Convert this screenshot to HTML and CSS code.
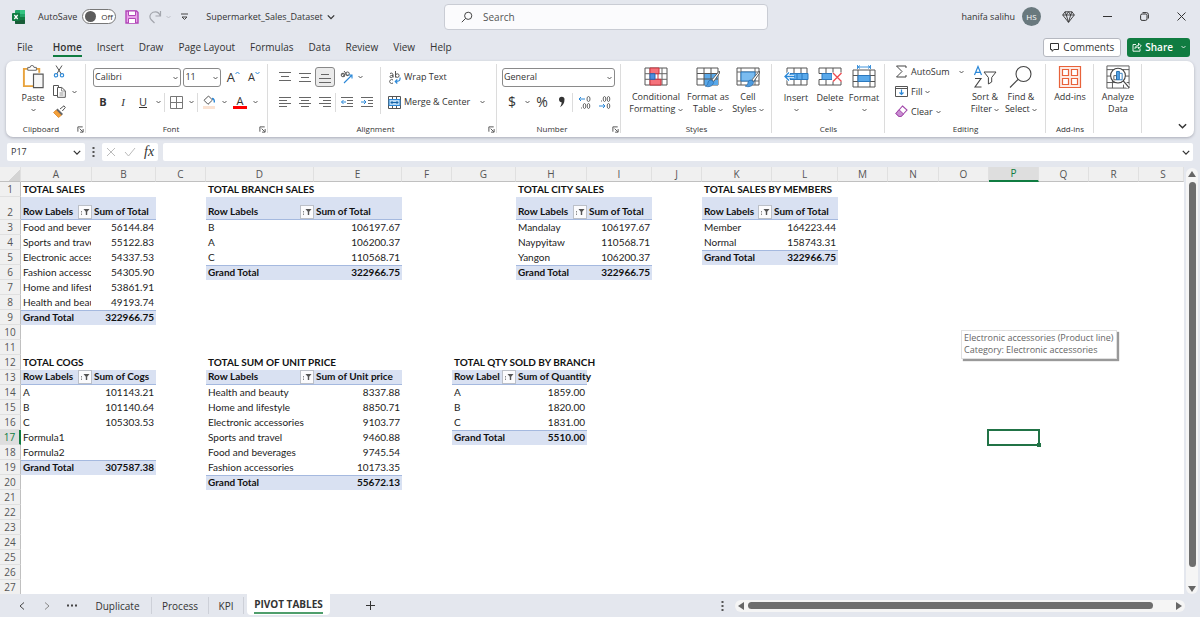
FILE: index.html
```html
<!DOCTYPE html>
<html lang="en">
<head>
  <meta charset="UTF-8">
  <meta name="viewport" content="width=device-width, initial-scale=1.0">
  <title>Supermarket_Sales_Dataset</title>
  <link rel="stylesheet" href="styles.css">
</head>
<body>
  <svg class="defs" aria-hidden="true">
    <symbol id="chev" viewBox="0 0 10 6"><path d="M1 1l4 4 4-4" fill="none" stroke="currentColor" stroke-width="1.6"/></symbol>
    <symbol id="launch" viewBox="0 0 8 8"><path d="M1 6.5V1h5.5M3 3l3.5 3.5M7 3.5V7H3.5" fill="none" stroke="#444" stroke-width="1"/></symbol>
    <symbol id="brush" viewBox="0 0 16 18"><path d="M15.3 1 8 9.8l1.8 1.6L15.6 3z" fill="#fff" stroke="#555" stroke-width=".9"/><path d="M7.6 10.2c-2.600-.6-3.500 1.200-3.800 3.200-.2 1.500-1.300 2.300-2.600 2.600 3 1.500 7.800.6 8.400-3.700z" fill="#4c9be0" stroke="#2b6fae" stroke-width=".8"/></symbol>
    <symbol id="filter" viewBox="0 0 12 12"><path d="M4.500 3h6L8.200 5.800V9H6.800V5.800z" fill="#555"/><path d="M2.500 5v4" stroke="#888" stroke-width="1" stroke-dasharray="1.500 1"/></symbol>
  </svg>

  <header class="titlebar">
    <div class="title-left">
      <svg class="logo" viewBox="0 0 13 14"><rect x="3" width="10" height="14" rx="1" fill="#21a366"/><path d="M8 0h4a1 1 0 0 1 1 1v3H8z" fill="#33c481"/><path d="M3 7h10v6a1 1 0 0 1-1 1H4a1 1 0 0 1-1-1z" fill="#185c37"/><path d="M8 7h5v3H8z" fill="#107c41"/><rect y="3" width="8" height="8" rx="1" fill="#107c41"/><path d="M2.300 5l3.400 4M5.700 5 2.300 9" stroke="#fff" stroke-width="1.200"/></svg>
      <label class="autosave" for="autosave">AutoSave</label>
      <span class="toggle"><input type="checkbox" id="autosave">Off</span>
      <button class="save" aria-label="Save"><svg width="14" height="14" viewBox="0 0 14 14"><path d="M1 1h10.500L13 2.500V13H1z" fill="#e9a3e9" stroke="#b146b8" stroke-width="1.400"/><path d="M3.500 1h7v4.500h-7zM3.500 13V8.500h7V13" fill="#fff" stroke="#b146b8"/></svg></button>
      <button class="redo" aria-label="Redo"><svg width="14" height="14" viewBox="0 0 14 14"><path d="M12.500 1v5H7.500M12.300 5.800C11 2.500 8 1.200 5 2.300 2 3.500 1 7 3 9.500L6.500 13" fill="none" stroke="#a3a6ad" stroke-width="1.200"/></svg><svg class="chev faint"><use href="#chev"/></svg></button>
      <button class="qat" aria-label="Customize Quick Access Toolbar"><svg width="7" height="8" viewBox="0 0 7 8"><path d="M0 1h7M1 4l2.500 2.500L6 4z" fill="none" stroke="#444"/></svg></button>
      <button class="filename">Supermarket_Sales_Dataset <svg width="8" height="6"><use href="#chev"/></svg></button>
    </div>
    <label class="search">
      <svg width="12" height="12" viewBox="0 0 12 12"><circle cx="7.200" cy="4.800" r="3.600" fill="none" stroke="#444"/><path d="M4.600 7.400.8 11.200" stroke="#444"/></svg>
      <input type="text" placeholder="Search" aria-label="Search">
    </label>
    <div class="title-right">
      <span>hanifa salihu</span>
      <span class="avatar">HS</span>
      <button aria-label="Premium"><svg width="13" height="12" viewBox="0 0 13 12"><path d="M3 .8h7L12.300 4 6.500 11.300.7 4zM.7 4h11.600M3 .8 4.300 4l2.200 7.300L8.700 4 10 .8M4.300 4l2.200-3.200L8.700 4" fill="none" stroke="#333" stroke-width=".9"/></svg></button>
      <button aria-label="Minimize"><svg width="9" height="9"><path d="M0 4.500h9" stroke="#333"/></svg></button>
      <button aria-label="Restore"><svg width="9" height="9" viewBox="0 0 9 9"><rect x=".6" y="2" width="6.400" height="6.400" rx="1.500" fill="none" stroke="#333"/><path d="M2.500.6h4A2 2 0 0 1 8.400 2.500v4" fill="none" stroke="#333"/></svg></button>
      <button aria-label="Close"><svg width="9" height="9"><path d="M.5.5l8 8M8.500.5l-8 8" stroke="#333"/></svg></button>
    </div>
  </header>

  <nav class="menubar">
    <a href="#">File</a>
    <a href="#" class="current">Home</a>
    <a href="#">Insert</a>
    <a href="#">Draw</a>
    <a href="#">Page Layout</a>
    <a href="#">Formulas</a>
    <a href="#">Data</a>
    <a href="#">Review</a>
    <a href="#">View</a>
    <a href="#">Help</a>
    <button class="comments"><svg width="9" height="9" viewBox="0 0 9 9"><path d="M.5.500h8v6H4L2 8.300V6.500H.5z" fill="none" stroke="#333"/></svg>Comments</button>
    <button class="share"><svg width="10" height="10" viewBox="0 0 10 10"><path d="M4 2.500H1v6.700h7V6.500M3 6.500c.3-2.300 1.500-3 3.500-3V1.200L9.300 4 6.500 6.600V5C5 5 4 5.300 3 6.500z" fill="none" stroke="#fff" stroke-width=".9"/></svg>Share<svg class="chev"><use href="#chev"/></svg></button>
  </nav>

  <section class="ribbon">
    <div class="group clipboard">
      <div class="body">
        <button class="big paste">
          <svg width="23" height="25" viewBox="0 0 23 25"><path d="M11 22H1.500V4h16v4" fill="none" stroke="#e8a33d" stroke-width="2"/><path d="M5.500 5.500v-3H8a2 2 0 0 1 4 0h2.500v3z" fill="#fff" stroke="#666"/><path d="M11.500 9.500h10v14h-10z" fill="#f7f7f7" stroke="#555" stroke-width="1.200"/></svg>
          <span>Paste</span>
          <svg class="chev"><use href="#chev"/></svg>
        </button>
        <div class="clip-tools">
          <button aria-label="Cut"><svg width="12" height="13" viewBox="0 0 12 13"><path d="M3 .5 8.300 9M9 .5 3.700 9" fill="none" stroke="#555"/><circle cx="3" cy="10.300" r="1.700" fill="none" stroke="#2b88d8" stroke-width="1.100"/><circle cx="9" cy="10.300" r="1.700" fill="none" stroke="#2b88d8" stroke-width="1.100"/></svg></button>
          <button aria-label="Copy"><svg width="13" height="13" viewBox="0 0 13 13"><path d="M4.500 10.500H.5V.5h5v2M4.500 2.500h4.300l3.500 3.300v6.500H4.500z" fill="none" stroke="#555"/><path d="M8.500 2.500V6h3.700M6.500 8h4M6.500 10h4" fill="none" stroke="#777" stroke-width=".8"/></svg><svg class="chev"><use href="#chev"/></svg></button>
          <button aria-label="Format Painter"><svg width="13" height="13" viewBox="0 0 13 13"><path d="M7 4 11 .8l1.300 1.700L9.300 6" fill="#fff" stroke="#555"/><path d="M4.500 3.500 10 9 8.500 10.500 3 5z" fill="#666"/><path d="M3 5.200.5 7.500 5.500 12.500 8.300 10.300z" fill="#f4a13a" stroke="#d57a1a" stroke-width=".7"/></svg></button>
        </div>
      </div>
      <div class="caption">Clipboard<button class="launch" aria-label="Clipboard settings"><svg width="7" height="7"><use href="#launch"/></svg></button></div>
    </div>

    <div class="group font">
      <div class="body stack">
        <div class="row">
          <span class="pick pick-font"><select aria-label="Font"><option>Calibri</option></select><svg class="chev"><use href="#chev"/></svg></span>
          <span class="pick pick-size"><select aria-label="Font size"><option>11</option></select><svg class="chev"><use href="#chev"/></svg></span>
          <button class="grow" aria-label="Increase font size"><b>A</b><svg width="5" height="4"><path d="M.5 3l2-2 2 2" fill="none" stroke="#2b88d8"/></svg></button>
          <button class="grow small" aria-label="Decrease font size"><b>A</b><svg width="5" height="4"><path d="M.5 1l2 2 2-2" fill="none" stroke="#2b88d8"/></svg></button>
        </div>
        <div class="row tools">
          <button class="cell20 letter bold">B</button>
          <button class="cell20 letter italic">I</button>
          <button class="cell20 letter underline">U</button>
          <button class="drop" aria-label="Underline options"><svg class="chev"><use href="#chev"/></svg></button>
          <i class="sep"></i>
          <button class="cell20 narrow" aria-label="Borders"><svg width="13" height="13"><path d="M.5.5h12v12H.5zM6.500.5v12M.5 6.500h12" fill="none" stroke="#777"/></svg></button>
          <button class="drop" aria-label="Border options"><svg class="chev"><use href="#chev"/></svg></button>
          <i class="sep"></i>
          <button class="cell20 narrow" aria-label="Fill colour"><svg width="13" height="14" viewBox="0 0 13 14"><path d="M5.500 1 9.500 5 5 9.300 1 5.300z" fill="#fff" stroke="#555"/><path d="M9 3.500c1.800 0 2.500 1.500 2.300 4" fill="none" stroke="#2b88d8" stroke-width="1.400"/><rect y="11" width="12" height="3" fill="#fbe3d3"/></svg></button>
          <button class="drop" aria-label="Fill options"><svg class="chev"><use href="#chev"/></svg></button>
          <button class="cell20 fontcolor">A</button>
          <button class="drop" aria-label="Font colour options"><svg class="chev"><use href="#chev"/></svg></button>
        </div>
      </div>
      <div class="caption">Font<button class="launch" aria-label="Font settings"><svg width="7" height="7"><use href="#launch"/></svg></button></div>
    </div>

    <div class="group align">
      <div class="body">
        <div class="stack align-left">
          <div class="row">
            <button class="cell20" aria-label="Top align"><svg class="lines"><path d="M0 1.500h12M2 5.500h8M0 9.500h12"/></svg></button>
            <button class="cell20" aria-label="Middle align"><svg class="lines"><path d="M0 2.500h12M2 6.500h8M0 10.500h12"/></svg></button>
            <button class="cell20 pressed" aria-label="Bottom align"><svg class="lines"><path d="M2 3.500h8M0 7.500h12M0 11.500h12"/></svg></button>
            <button class="orient" aria-label="Orientation"><svg width="13" height="14" viewBox="0 0 13 14"><g fill="none" stroke="#555"><circle cx="3" cy="5" r="1.800"/><path d="M4.500 6.500 2 3.200M4 1l4 5"/><circle cx="7.500" cy="3.800" r="1.800"/></g><path d="M4 13 12 5M8.500 5H12v3.500" fill="none" stroke="#2b88d8" stroke-width="1.100"/></svg><svg class="chev"><use href="#chev"/></svg></button>
          </div>
          <div class="row tools">
            <button class="cell20" aria-label="Align left"><svg class="lines"><path d="M0 1.500h12M0 4.500h8M0 7.500h12M0 10.500h8"/></svg></button>
            <button class="cell20" aria-label="Center"><svg class="lines"><path d="M0 1.500h12M2 4.500h8M0 7.500h12M2 10.500h8"/></svg></button>
            <button class="cell20" aria-label="Align right"><svg class="lines"><path d="M0 1.500h12M4 4.500h8M0 7.500h12M4 10.500h8"/></svg></button>
            <i class="sep thin"></i>
            <button class="cell20" aria-label="Decrease indent"><svg class="lines"><path d="M0 1.500h12M6 4.500h6M6 7.500h6M0 10.500h12"/><path class="blue" d="M5 6H.5M2.500 4l-2 2 2 2"/></svg></button>
            <button class="cell20" aria-label="Increase indent"><svg class="lines"><path d="M0 1.500h12M7 4.500h5M7 7.500h5M0 10.500h12"/><path class="blue" d="M0 6h4.500M3 4l2 2-2 2"/></svg></button>
          </div>
        </div>
        <div class="stack align-right">
          <button class="row"><svg width="13" height="13" viewBox="0 0 13 13"><g fill="none" stroke="#555"><path d="M2 2.500c2-1 3 0 3 1.500v2.500M5 4.500c-4-.3-4 2.500-1.500 2 1-.2 1.500-1 1.500-1.500M7.500 0v6.500"/><circle cx="9.300" cy="4.600" r="1.800"/><path d="M5 9a2 2 0 1 0 0 3"/></g><path d="M12 6.500c.5 3-1 4-4.500 4M9.300 8.500l-2 2 2 2" fill="none" stroke="#2b88d8" stroke-width="1.200"/></svg>Wrap Text</button>
          <button class="row tools"><svg width="13" height="13"><path d="M.5.5h12v12H.5z" fill="#fff" stroke="#555"/><path d="M4.500.5v3M8.500.5v3M4.500 9.500v3M8.500 9.500v3" stroke="#555"/><path d="M1 3.500h11v6H1z" fill="#b5d8f5" stroke="#2b88d8"/><path d="M3 6.500h7M4.500 5 3 6.500 4.500 8M8.500 5 10 6.500 8.500 8" fill="none" stroke="#1665a8"/></svg>Merge &amp; Center<svg class="chev"><use href="#chev"/></svg></button>
        </div>
      </div>
      <div class="caption">Alignment<button class="launch" aria-label="Alignment settings"><svg width="7" height="7"><use href="#launch"/></svg></button></div>
    </div>

    <div class="group number">
      <div class="body stack">
        <div class="row"><span class="pick pick-number"><select aria-label="Number format"><option>General</option></select><svg class="chev"><use href="#chev"/></svg></span></div>
        <div class="row tools">
          <button class="cell20 sign">$</button>
          <button class="drop" aria-label="Currency options"><svg class="chev"><use href="#chev"/></svg></button>
          <button class="cell20 sign">%</button>
          <button class="cell20" aria-label="Comma style"><svg width="8" height="12" viewBox="0 0 8 12"><path d="M1 3.500a2.700 2.700 0 1 1 5.500 0C6.500 7 5 9.500 2 11.300c1-1.700 1.600-3 1.600-5C2 6.300 1 5 1 3.500z" fill="#333"/></svg></button>
          <i class="sep thin"></i>
          <button class="cell20" aria-label="Increase decimal"><svg width="13" height="13" viewBox="0 0 13 13"><path d="M7 3H1M3 1 1 3l2 2" fill="none" stroke="#2b88d8"/><g fill="none" stroke="#555" stroke-width=".9"><ellipse cx="10.500" cy="3" rx="1.500" ry="2.500"/><ellipse cx="6.500" cy="10" rx="1.300" ry="2.500"/><ellipse cx="10.500" cy="10" rx="1.300" ry="2.500"/><path d="M3 12h1"/></g></svg></button>
          <button class="cell20" aria-label="Decrease decimal"><svg width="13" height="13" viewBox="0 0 13 13"><path d="M1 10h6M5 8l2 2-2 2" fill="none" stroke="#2b88d8"/><g fill="none" stroke="#555" stroke-width=".9"><ellipse cx="6.500" cy="3" rx="1.300" ry="2.500"/><ellipse cx="10.500" cy="3" rx="1.300" ry="2.500"/><ellipse cx="10.500" cy="10" rx="1.300" ry="2.500"/><path d="M3 5h1"/></g></svg></button>
        </div>
      </div>
      <div class="caption">Number<button class="launch" aria-label="Number settings"><svg width="7" height="7"><use href="#launch"/></svg></button></div>
    </div>

    <div class="group styles">
      <div class="body">
        <button class="big w56"><svg width="24" height="22" viewBox="0 0 24 22"><path d="M1 2h22v17H1z" fill="#fff" stroke="#555"/><path d="M1 7.700h22M1 13.300h22M6 2v17M18 2v17" stroke="#666"/><path d="M6 2h9v5.700H6zM6 13.300h11V19H6z" fill="#f5727b" stroke="#c9353f"/><path d="M6 7.700h5v5.600H6z" fill="#4c8fe0" stroke="#2d62ad"/><path d="M14 7.700v5.600" stroke="#c9353f"/></svg><span>Conditional<br>Formatting <svg class="chev"><use href="#chev"/></svg></span></button>
        <button class="big w48"><svg width="25" height="22" viewBox="0 0 25 22"><path d="M1 2h21v17H1z" fill="#fff" stroke="#555"/><path d="M8 7.500h14V19H8z" fill="#5aa9ea"/><path d="M1 7.500h21M1 13h21M8 2v17M15 2v17" stroke="#555"/><use href="#brush" x="8" y="4" width="16" height="18"/></svg><span>Format as<br>Table <svg class="chev"><use href="#chev"/></svg></span></button>
        <button class="big w32"><svg width="25" height="22" viewBox="0 0 25 22"><path d="M1 2h22v17H1z" fill="#fff" stroke="#555"/><path d="M5 2v17M19 2v17M1 6h22M1 15h22" stroke="#666"/><path d="M5 6h14v9H5z" fill="#7bbcf0" stroke="#2b78be"/><use href="#brush" x="8" y="4" width="16" height="18"/></svg><span>Cell<br>Styles <svg class="chev"><use href="#chev"/></svg></span></button>
      </div>
      <div class="caption">Styles</div>
    </div>

    <div class="group cells">
      <div class="body">
        <button class="big w34"><svg width="25" height="22" viewBox="0 0 25 22"><path d="M3 2h20v17H3zM10 2v17M17 2v17" fill="#fff" stroke="#555"/><path d="M6 7.500h18v6H6z" fill="#5aa9ea" stroke="#2b78be"/><path d="M13 7.500v6M18 7.500v6" stroke="#2b78be"/><path d="M10 10.500H1.500M5 6.500l-4 4 4 4" fill="none" stroke="#fff" stroke-width="3"/><path d="M11 10.500H1.500M5 6.500l-4 4 4 4" fill="none" stroke="#2b88d8" stroke-width="1.300"/></svg><span>Insert</span><svg class="chev"><use href="#chev"/></svg></button>
        <button class="big w34"><svg width="25" height="22" viewBox="0 0 25 22"><path d="M1 7.500V2h22v5.500M1 13.500V19h22v-5.500M1 7.500h22M1 13.500h22M8 2v17M15 2v17" fill="none" stroke="#555"/><path d="M4 7.500h10v6H4z" fill="#5aa9ea" stroke="#2b78be"/><path d="M14 6.500h10v9H14z" fill="#fff"/><path d="M15 7l8.500 8.500M23.500 7 15 15.500" stroke="#ed4a50" stroke-width="1.300"/></svg><span>Delete</span><svg class="chev"><use href="#chev"/></svg></button>
        <button class="big w34"><svg width="24" height="24" viewBox="0 0 24 24"><path d="M6 2h12M8 .500 6 2l2 1.500M16 .5 18 2l-2 1.500M5.500 0v4M18.500 0v4" fill="none" stroke="#2b88d8" stroke-width=".9"/><path d="M1 5h22v17H1zM1 10.500h22M1 16.500h22M6 5v17M18 5v17" fill="#fff" stroke="#555"/><path d="M6 10.500h12v6H6z" fill="#5aa9ea" stroke="#2b78be"/></svg><span>Format</span><svg class="chev"><use href="#chev"/></svg></button>
      </div>
      <div class="caption">Cells</div>
    </div>

    <div class="group editing">
      <div class="body">
        <div class="edit-tools">
          <button><svg width="13" height="13" viewBox="0 0 13 13"><path d="M11 3V1H1.500L7 6.500 1.500 12H11v-2" fill="none" stroke="#444"/></svg>AutoSum<svg class="chev far"><use href="#chev"/></svg></button>
          <button><svg width="13" height="13"><path d="M.5 1.500h12v10H.5zM.5 3.500h12" fill="#fff" stroke="#555"/><path d="M6.500 4.500v5M4.500 7.500l2 2 2-2" fill="none" stroke="#2b88d8" stroke-width="1.200"/></svg>Fill <svg class="chev"><use href="#chev"/></svg></button>
          <button><svg width="13" height="13" viewBox="0 0 13 13"><path d="M7.500 1 12 5 6 11.500H4L1 8.500z" fill="#fff" stroke="#a349ab" stroke-width="1.100"/><path d="M4 4.700 8.500 9 6 11.500H4L1 8.500z" fill="#c98fd2" stroke="#a349ab"/></svg>Clear <svg class="chev"><use href="#chev"/></svg></button>
        </div>
        <button class="big w36"><svg width="24" height="24" viewBox="0 0 24 24"><path d="M1.500 10 5 1.500 8.500 10M2.700 7.300h4.600" fill="none" stroke="#2b88d8" stroke-width="1.200"/><path d="M2 13.500h6L2 22h6.500" fill="none" stroke="#444" stroke-width="1.100"/><path d="M11 7h12l-4.300 5.500V17l-3.300 2v-6.500z" fill="#fff" stroke="#444"/></svg><span>Sort &amp;<br>Filter <svg class="chev"><use href="#chev"/></svg></span></button>
        <button class="big w36"><svg width="24" height="24" viewBox="0 0 24 24"><circle cx="14.500" cy="9" r="7.500" fill="#fff" stroke="#444" stroke-width="1.100"/><path d="M9 14.500 1 22.500" stroke="#444" stroke-width="1.100"/></svg><span>Find &amp;<br>Select <svg class="chev"><use href="#chev"/></svg></span></button>
      </div>
      <div class="caption">Editing</div>
    </div>

    <div class="group single">
      <div class="body"><button class="big w48"><svg width="24" height="24"><path d="M1.500 1.500h21v21h-21z" fill="#fdebe5" stroke="#e8623a" stroke-width="1.200"/><path d="M4.500 4.500h6v6h-6zM13.500 4.500h6v6h-6zM4.500 13.500h6v6h-6zM13.500 13.500h6v6h-6z" fill="#fff" stroke="#e8623a" stroke-width="1.200"/></svg><span>Add-ins</span></button></div>
      <div class="caption">Add-ins</div>
    </div>

    <div class="group single">
      <div class="body"><button class="big w48"><svg width="26" height="26" viewBox="0 0 26 26"><path d="M1 1h24v24H1zM1 5h24M1 12h24M1 19h24M7 5v20M19 5v20" fill="#fff" stroke="#555"/><path d="M18 17.500 24.500 24" stroke="#fff" stroke-width="4"/><circle cx="13" cy="11.500" r="8" fill="#fff" stroke="#444" stroke-width="1.200"/><path d="M18.700 17.200 25 24.500" stroke="#444" stroke-width="1.300"/><path d="M8.500 11.500h3V16h-3z" fill="#fff" stroke="#555"/><path d="M11.500 7h3v9h-3z" fill="#5aa9ea" stroke="#1665a8"/><path d="M14.500 9h3v7h-3z" fill="#fff" stroke="#2b78be"/></svg><span>Analyze<br>Data</span></button></div>
    </div>
    <button class="collapse" aria-label="Collapse ribbon"><svg width="9" height="6"><use href="#chev"/></svg></button>
  </section>

  <section class="formula-bar">
    <span class="namebox"><input type="text" value="P17" aria-label="Name box"><svg width="8" height="5"><use href="#chev"/></svg></span>
    <svg class="dots" width="3" height="10"><path d="M1.500 0v10" stroke="#555" stroke-width="2" stroke-dasharray="2 2"/></svg>
    <span class="fx">
      <button aria-label="Cancel"><svg width="10" height="10"><path d="M1 1l8 8M9 1 1 9" stroke="#bbb"/></svg></button>
      <button aria-label="Enter"><svg width="12" height="10"><path d="M1 5l3.500 4L11 1" fill="none" stroke="#bbb"/></svg></button>
      <button class="fn">fx</button>
    </span>
    <span class="formula"><input type="text" aria-label="Formula"><svg width="8" height="5"><use href="#chev"/></svg></span>
  </section>

  <main class="workspace">
    <div class="sheet">
      <table id="grid"></table>
      <div class="tip" role="tooltip">Electronic accessories (Product line)<br>Category: Electronic accessories</div>
    </div>
    <div class="vscroll">
      <svg width="8" height="6"><path d="M4 0l4 6H0z" fill="#666"/></svg>
      <div class="thumb"></div>
      <svg width="8" height="6"><path d="M0 0h8L4 6z" fill="#666"/></svg>
    </div>
  </main>

  <footer class="tabs">
    <button class="nav" aria-label="Previous sheet"><svg width="6" height="8"><path d="M5 .5 1 4l4 3.500" fill="none" stroke="#444"/></svg></button>
    <button class="nav" aria-label="Next sheet"><svg width="6" height="8"><path d="M1 .5 5 4 1 7.500" fill="none" stroke="#888"/></svg></button>
    <button class="nav" aria-label="All sheets"><svg width="10" height="3"><path d="M0 1.500h10" stroke="#444" stroke-width="2" stroke-dasharray="2 2"/></svg></button>
    <button class="tab t1">Duplicate</button>
    <button class="tab t2">Process</button>
    <button class="tab t3">KPI</button>
    <button class="tab active"><span>PIVOT TABLES</span></button>
    <button class="add" aria-label="New sheet"><svg width="9" height="9"><path d="M4.500 0v9M0 4.500h9" stroke="#333"/></svg></button>
    <svg class="dots" width="3" height="10"><path d="M1.500 0v10" stroke="#555" stroke-width="2" stroke-dasharray="2 2"/></svg>
    <div class="hscroll">
      <svg width="6" height="8"><path d="M6 0v8L0 4z" fill="#666"/></svg>
      <div class="thumb"></div>
      <svg width="6" height="8"><path d="M0 0v8l6-4z" fill="#666"/></svg>
    </div>
  </footer>

  <script>
    const cols = 'ABCDEFGHIJKLMNOPQRS'.split('');
    const pivots = [
      { at: ['A', 'B', 1], title: 'TOTAL SALES', value: 'Sum of Total', clip: true, rows: [
        ['Food and beverages', '56144.84'], ['Sports and travel', '55122.83'], ['Electronic accessories', '54337.53'],
        ['Fashion accessories', '54305.90'], ['Home and lifestyle', '53861.91'], ['Health and beauty', '49193.74']], total: '322966.75' },
      { at: ['D', 'E', 1], title: 'TOTAL BRANCH SALES', value: 'Sum of Total', rows: [
        ['B', '106197.67'], ['A', '106200.37'], ['C', '110568.71']], total: '322966.75' },
      { at: ['H', 'I', 1], title: 'TOTAL CITY SALES', value: 'Sum of Total', rows: [
        ['Mandalay', '106197.67'], ['Naypyitaw', '110568.71'], ['Yangon', '106200.37']], total: '322966.75' },
      { at: ['K', 'L', 1], title: 'TOTAL SALES BY MEMBERS', value: 'Sum of Total', rows: [
        ['Member', '164223.44'], ['Normal', '158743.31']], total: '322966.75' },
      { at: ['A', 'B', 12], title: 'TOTAL COGS', value: 'Sum of Cogs', rows: [
        ['A', '101143.21'], ['B', '101140.64'], ['C', '105303.53'], ['Formula1', ''], ['Formula2', '']], total: '307587.38' },
      { at: ['D', 'E', 12], title: 'TOTAL SUM OF UNIT PRICE', value: 'Sum of Unit price', rows: [
        ['Health and beauty', '8337.88'], ['Home and lifestyle', '8850.71'], ['Electronic accessories', '9103.77'],
        ['Sports and travel', '9460.88'], ['Food and beverages', '9745.54'], ['Fashion accessories', '10173.35']], total: '55672.13' },
      { at: ['G', 'H', 12], title: 'TOTAL QTY SOLD BY BRANCH', value: 'Sum of Quantity', rows: [
        ['A', '1859.00'], ['B', '1820.00'], ['C', '1831.00']], total: '5510.00' }
    ];

    const cells = {};
    pivots.forEach(p => {
      const [a, b, top] = p.at;
      cells[a + top] = ['title', p.title];
      cells[a + (top + 1)] = ['head', `<span class="clip">Row Labels</span><button class="filter" aria-label="Filter"><svg width="12" height="12"><use href="#filter"/></svg></button>`];
      cells[b + (top + 1)] = ['head', p.value];
      p.rows.forEach((r, i) => {
        cells[a + (top + 2 + i)] = ['', p.clip ? `<div class="clip">${r[0]}</div>` : r[0]];
        cells[b + (top + 2 + i)] = ['num', r[1]];
      });
      const end = top + 2 + p.rows.length;
      cells[a + end] = ['total', 'Grand Total'];
      cells[b + end] = ['total num', p.total];
    });
    cells.P17 = ['selected', ''];

    let html = '<colgroup><col class="c-row">' + cols.map(c => `<col class="c-${c}">`).join('') + '</colgroup>';
    html += '<thead><tr><th class="corner"></th>' + cols.map(c => `<th${c === 'P' ? ' class="on"' : ''}>${c}</th>`).join('') + '</tr></thead><tbody>';
    for (let r = 1; r <= 27; r++) {
      html += `<tr${r === 2 ? ' class="tall"' : ''}><th${r === 17 ? ' class="on"' : ''}>${r}</th>`;
      cols.forEach(c => {
        const [cls, text] = cells[c + r] || ['', ''];
        html += `<td${cls ? ` class="${cls}"` : ''}>${text}</td>`;
      });
      html += '</tr>';
    }
    document.getElementById('grid').innerHTML = html + '</tbody>';
  </script>
</body>
</html>
```
FILE: styles.css
```css
* {
  box-sizing: border-box;
}
body {
  margin: 0;
  height: 100vh;
  display: flex;
  flex-direction: column;
  overflow: hidden;
  background: #e4e7ee;
  color: #333;
  font: 9px/12px "Open Sans", sans-serif;
}
button, input, select {
  font: inherit;
  color: inherit;
  background: none;
  border: 0;
  padding: 0;
  margin: 0;
}
button {
  display: flex;
  align-items: center;
  white-space: nowrap;
}
svg {
  flex: none;
}
.defs {
  position: absolute;
  width: 0;
  height: 0;
}
.chev {
  width: 5px;
  height: 4px;
}

/* title bar */
.titlebar {
  display: grid;
  grid-template-columns: 1fr 324px 1fr;
  align-items: center;
  height: 33px;
  padding-left: 12px;
}
.title-left, .title-right {
  display: flex;
  align-items: center;
}
.logo {
  width: 13px;
  height: 14px;
}
.autosave {
  margin: 0 5px 0 13px;
}
.toggle {
  display: flex;
  align-items: center;
  gap: 5px;
  width: 34px;
  height: 15px;
  padding-left: 2px;
  border: 1px solid #777;
  border-radius: 8px;
  background: #fff;
  font-size: 8px;
}
.toggle input {
  appearance: none;
  width: 11px;
  height: 11px;
  border-radius: 50%;
  background: #5c5c5c;
}
.save {
  margin: 0 9px;
}
.redo {
  gap: 4px;
}
.faint {
  color: #b4b7be;
}
.qat {
  margin: 0 18px 0 10px;
}
.filename {
  gap: 4px;
}
.search {
  display: flex;
  align-items: center;
  gap: 10px;
  height: 26px;
  padding-left: 16px;
  background: #fbfbfd;
  border: 1px solid #c9ccd4;
  border-radius: 4px;
}
.search input {
  flex: 1;
  font-size: 10px;
  outline: 0;
}
.search input::placeholder {
  color: #555;
  opacity: 1;
}
.title-right {
  justify-content: flex-end;
  padding-right: 14px;
}
.title-right button {
  justify-content: center;
  margin-left: 28px;
}
.title-right .avatar + button {
  margin-left: 21px;
}
.avatar {
  width: 19px;
  height: 19px;
  margin-left: 7px;
  border-radius: 50%;
  background: #69797e;
  color: #fff;
  font-size: 8px;
  line-height: 19px;
  text-align: center;
}

/* menu */
.menubar {
  display: flex;
  align-items: center;
  gap: 15px;
  height: 28px;
  padding: 0 10px 0 17px;
  font-size: 10px;
}
.menubar a {
  color: #333;
  text-decoration: none;
  line-height: 15px;
  padding-top: 3px;
  border-bottom: 2px solid transparent;
}
.menubar a:first-child {
  margin-right: 5px;
}
.menubar .current {
  font-weight: 600;
  border-color: #107c41;
}
.comments, .share {
  height: 19px;
  gap: 4px;
  padding: 0 6px;
  border-radius: 3px;
  font-weight: 600;
}
.comments {
  margin-left: auto;
  background: #fff;
  border: 1px solid #b5b8c0;
  font-weight: 400;
}
.share {
  gap: 3px;
  padding: 0 4px 0 5px;
  margin-left: -9px;
  background: #107c41;
  color: #fff;
}
.share .chev {
  margin-left: 5px;
}

/* ribbon */
.ribbon {
  display: flex;
  margin: 0 6px;
  background: #fff;
  border-radius: 7px;
  box-shadow: 0 1px 3px rgba(60, 64, 80, .35);
}
.group {
  display: flex;
  flex-direction: column;
  position: relative;
  flex: none;
}
.group::after {
  content: "";
  position: absolute;
  right: 0;
  top: 3px;
  bottom: 4px;
  width: 1px;
  background: #dcdcdc;
}
.clipboard { width: 80px; }
.font { width: 182px; }
.align { width: 229px; }
.number { width: 124px; }
.styles { width: 151px; }
.cells { width: 113px; }
.editing { width: 161px; }
.single { width: 48px; }
.body {
  display: flex;
  height: 61px;
}
.stack {
  display: flex;
  flex-direction: column;
}
.caption {
  height: 15px;
  font-size: 8px;
  line-height: 14px;
  text-align: center;
}
.clipboard .caption {
  padding-right: 10px;
}
.align .caption, .number .caption {
  padding-right: 14px;
}
.font .caption {
  padding-right: 12px;
}
.launch {
  position: absolute;
  right: 2px;
  bottom: 4px;
}
.big {
  flex-direction: column;
  padding-top: 4px;
  flex: none;
}
.big > svg:first-child {
  height: 24px;
}
.big > span {
  margin-top: 2px;
}
.cells .big > span, .paste > span {
  margin-top: 3px;
}
.big > .chev {
  margin-top: 4px;
}
.w32 { width: 32px; }
.w34 { width: 34px; }
.w36 { width: 36px; }
.w48 { width: 48px; }
.w56 { width: 56px; }
.paste {
  margin-left: 15px;
  width: 24px;
}
.clip-tools {
  display: flex;
  flex-direction: column;
  gap: 7px;
  padding: 4px 0 0 8px;
}
.clip-tools button {
  gap: 6px;
}
.row {
  display: flex;
  align-items: center;
  height: 20px;
  margin-top: 6px;
}
.tools {
  margin-top: 5px;
}
.stack.body, .align-left {
  padding-left: 7px;
}
.pick {
  position: relative;
  height: 19px;
  border: 1px solid #8a8a8a;
  border-radius: 3px;
}
.pick select {
  appearance: none;
  width: 100%;
  height: 100%;
  padding-left: 1px;
}
.pick svg {
  position: absolute;
  right: 2px;
  top: 7px;
  pointer-events: none;
}
.pick-font { width: 90px; }
.pick-size { width: 38px; margin: 0 6px 0 2px; }
.pick-number { width: 113px; }
.number .stack {
  padding-left: 5px;
}
.grow {
  align-items: flex-start;
  margin-right: 8px;
}
.grow b {
  font-size: 13px;
  font-weight: 400;
}
.grow.small b {
  font-size: 11px;
}
.cell20 {
  width: 20px;
  height: 20px;
  flex: none;
  justify-content: center;
}
.narrow {
  width: 19px;
}
.drop {
  width: 10px;
  height: 20px;
  justify-content: center;
}
.letter {
  font-size: 11px;
}
.bold {
  font-weight: 700;
}
.italic {
  font-family: "Liberation Serif", serif;
  font-style: italic;
}
.underline {
  text-decoration: underline;
}
.sep {
  width: 1px;
  height: 19px;
  margin: 0 2px 0 1px;
  background: #dcdcdc;
}
.thin {
  margin: 0 1px 0 0;
}
.fontcolor {
  width: 14px;
  height: 14px;
  margin: 0 3px 0 4px;
  line-height: 11px;
  font-size: 11px;
  border-bottom: 3px solid #f00;
}
.lines {
  width: 12px;
  height: 13px;
  fill: none;
  stroke: #666;
}
.lines .blue {
  stroke: #2b88d8;
}
.pressed {
  background: #ebebeb;
  border: 1px solid #888;
  border-radius: 3px;
}
.orient {
  gap: 5px;
  margin-left: 5px;
}
.align-left {
  width: 113px;
  position: relative;
}
.align-left::after {
  content: "";
  position: absolute;
  right: 0;
  top: 6px;
  bottom: 8px;
  width: 1px;
  background: #dcdcdc;
}
.align-right {
  padding-left: 7px;
}
.align-right .row {
  gap: 3px;
}
.align-right .chev {
  margin-left: 7px;
}
.sign {
  font-size: 14px;
}
.styles .body, .cells .body {
  padding-left: 7px;
}
.edit-tools {
  width: 82px;
  padding: 4px 0 0 10px;
}
.edit-tools button {
  height: 13px;
  margin-bottom: 7px;
  gap: 3px;
}
.edit-tools .far {
  margin-left: 6px;
}
.collapse {
  margin: auto 7px 8px auto;
}

/* formula bar */
.formula-bar {
  display: flex;
  align-items: center;
  height: 30px;
  padding: 0 7px;
}
.formula-bar > span {
  display: flex;
  align-items: center;
  height: 18px;
  background: #fff;
  border-radius: 2px;
}
.formula-bar input {
  flex: 1;
  min-width: 0;
  outline: 0;
}
.namebox {
  width: 78px;
  padding: 0 4px;
}
.formula-bar .dots {
  margin: 0 7px;
}
.fx {
  width: 56px;
  gap: 8px;
  padding: 0 4px;
}
.fn {
  font: italic 14px/16px "Liberation Serif", serif;
}
.formula {
  flex: 1;
  margin-left: 5px;
  padding: 0 3px;
}

/* sheet */
.workspace {
  display: flex;
  flex: 1;
  min-height: 0;
}
.sheet {
  position: relative;
  flex: 1;
  overflow: hidden;
  background: #fff;
}
table {
  width: 100%;
  table-layout: fixed;
  border-collapse: separate;
  border-spacing: 0;
  font: 10px/13px Lato, sans-serif;
  color: #222;
}
.c-row { width: 21px; }
.c-A, .c-H { width: 71px; }
.c-B, .c-G { width: 64px; }
.c-C, .c-F, .c-J, .c-M, .c-O, .c-P, .c-Q, .c-R { width: 50px; }
.c-N { width: 51px; }
.c-D { width: 108px; }
.c-E { width: 88px; }
.c-I { width: 65px; }
.c-K { width: 70px; }
.c-L { width: 66px; }
th, td {
  height: 15px;
  padding: 0 2px 1px;
  white-space: nowrap;
  text-align: left;
  vertical-align: bottom;
}
th {
  font: 10px/14px "Open Sans", sans-serif;
  color: #555;
  text-align: center;
  background: #f0f0f0;
}
thead th {
  padding: 0;
  border-right: 1px solid #e0e0e0;
  border-bottom: 1px solid #c0c0c0;
}
thead th:last-child {
  padding-left: 4px;
}
tbody th {
  padding: 0;
  line-height: 13px;
  border-right: 1px solid #c0c0c0;
  border-bottom: 1px solid #e0e0e0;
}
.corner {
  background: linear-gradient(135deg, #f0f0f0 65%, #d4d4d4 65%);
}
th.on {
  color: #107c41;
  background: #dedede;
}
thead .on {
  border-bottom: 2px solid #107c41;
  line-height: 13px;
}
tbody .on {
  border-right: 2px solid #107c41;
}
.tall td, .tall th {
  height: 23px;
}
.title, .head, .total {
  font-weight: 700;
  color: #111;
}
.head, .total {
  position: relative;
  background: #d9e1f2;
}
.head {
  border-bottom: 1px solid #a5b9df;
}
.total {
  border-top: 1px solid #a5b9df;
}
.num {
  text-align: right;
}
.clip {
  display: block;
  overflow: hidden;
}
td > div.clip {
  margin-right: -1px;
}
.head .clip {
  margin-right: 14px;
}
.filter {
  position: absolute;
  right: 1px;
  bottom: 1px;
  width: 12px;
  height: 12px;
  background: #fbfbfd;
  box-shadow: 0 0 0 1px #bcc0c8;
}
.selected {
  position: relative;
}
.selected::before {
  content: "";
  position: absolute;
  inset: -1px -1px -1px -2px;
  border: 2px solid #217346;
}
.selected::after {
  content: "";
  position: absolute;
  right: -2px;
  bottom: -2px;
  width: 4px;
  height: 4px;
  background: #217346;
}
.tip {
  position: absolute;
  left: 961px;
  top: 163px;
  padding: 1px 2px 2px;
  color: #666;
  background: #fff;
  border: 1px solid #e0e0e0;
  box-shadow: 2px 2px 1px #999;
}
.vscroll {
  display: flex;
  flex-direction: column;
  align-items: center;
  gap: 5px;
  width: 12px;
  margin: 1px 2px 0;
  padding: 3px 0 2px;
  background: #f5f5f5;
  border-radius: 6px;
}
.thumb {
  background: #6e6e6e;
  border-radius: 4px;
}
.vscroll .thumb {
  flex: 1;
  width: 7px;
  margin-bottom: 14px;
}

/* sheet tabs */
.tabs {
  display: flex;
  align-items: center;
  height: 23px;
  padding: 0 15px 0 9px;
  font-size: 10px;
}
.nav {
  width: 25px;
  justify-content: center;
}
.tab {
  height: 17px;
  justify-content: center;
  border-right: 1px solid #cdd0d8;
}
.t1 { width: 68px; }
.t2 { width: 57px; }
.t3 { width: 35px; }
.tab.active {
  align-self: flex-start;
  width: 83px;
  height: 21px;
  margin-left: 3px;
  background: #fff;
  border: 0;
  border-radius: 0 0 4px 4px;
  font-weight: 700;
}
.active span {
  line-height: 16px;
  border-bottom: 2px solid #4f9e6c;
}
.add {
  margin: 0 auto 0 36px;
}
.hscroll {
  display: flex;
  align-items: center;
  gap: 4px;
  width: 450px;
  height: 12px;
  margin-left: 11px;
  padding: 0 3px;
  background: #f5f5f5;
  border-radius: 6px;
}
.hscroll .thumb {
  flex: 1;
  height: 7px;
  margin-right: 19px;
}
```
